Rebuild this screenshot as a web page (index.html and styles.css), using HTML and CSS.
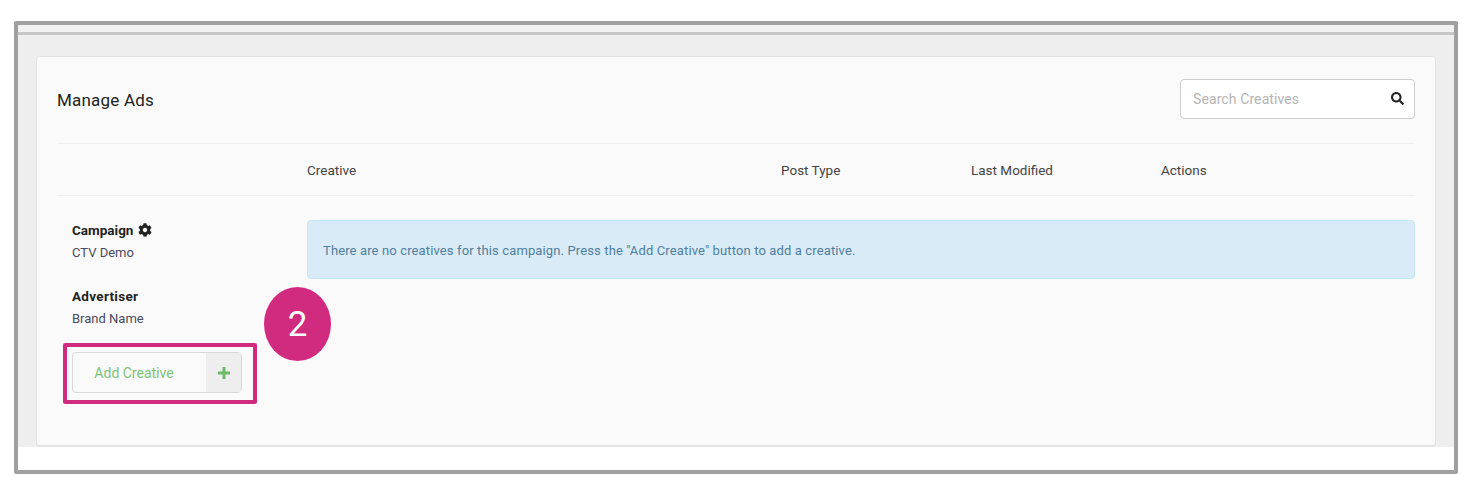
FILE: index.html
```html
<!DOCTYPE html>
<html lang="en">
<head>
    <meta charset="UTF-8">
    <title>Manage Ads</title>
    <link rel="stylesheet" href="styles.css">
</head>
<body>
    <div class="frame">
        <div class="top-strip"></div>
        <div class="page">
            <div class="panel">
                <div class="panel-head">
                    <h1>Manage Ads</h1>
                    <div class="search">
                        <span class="search-text">Search Creatives</span>
                        <svg class="search-icon" viewBox="0 0 512 512"><path d="M505 442.7L405.3 343c-4.5-4.5-10.6-7-17-7H372c27.6-35.3 44-79.7 44-128C416 93.1 322.9 0 208 0S0 93.1 0 208s93.1 208 208 208c48.3 0 92.7-16.4 128-44v16.3c0 6.4 2.5 12.5 7 17l99.7 99.7c9.4 9.4 24.6 9.4 33.9 0l28.3-28.3c9.4-9.4 9.4-24.6.1-34zM208 336c-70.7 0-128-57.2-128-128 0-70.7 57.2-128 128-128 70.7 0 128 57.2 128 128 0 70.7-57.2 128-128 128z"/></svg>
                    </div>
                </div>
                <div class="table-head">
                    <span></span>
                    <span>Creative</span>
                    <span>Post Type</span>
                    <span>Last Modified</span>
                    <span>Actions</span>
                </div>
                <div class="table-body">
                    <div class="side">
                        <div class="label">Campaign
                            <svg class="gear" viewBox="0 0 512 512"><path d="M487.4 315.7l-42.6-24.6c4.3-23.2 4.3-47 0-70.2l42.6-24.6c4.9-2.8 7.1-8.6 5.5-14-11.1-35.6-30-67.8-54.7-94.6-3.8-4.1-10-5.1-14.8-2.3L380.8 110c-17.9-15.4-38.5-27.3-60.8-35.1V25.8c0-5.6-3.9-10.5-9.4-11.7-36.7-8.2-74.3-7.8-109.2 0-5.5 1.2-9.4 6.1-9.4 11.7V75c-22.2 7.9-42.8 19.8-60.8 35.1L88.7 85.5c-4.9-2.8-11-1.9-14.8 2.3-24.7 26.7-43.6 58.9-54.7 94.6-1.7 5.4.6 11.2 5.5 14L67.3 221c-4.3 23.2-4.3 47 0 70.2l-42.6 24.6c-4.9 2.8-7.1 8.6-5.5 14 11.1 35.6 30 67.8 54.7 94.6 3.8 4.1 10 5.1 14.8 2.3l42.6-24.6c17.9 15.4 38.5 27.3 60.8 35.1v49.2c0 5.6 3.9 10.5 9.4 11.7 36.7 8.2 74.3 7.8 109.2 0 5.5-1.2 9.4-6.1 9.4-11.7v-49.2c22.2-7.9 42.8-19.8 60.8-35.1l42.6 24.6c4.9 2.8 11 1.9 14.8-2.3 24.7-26.7 43.6-58.9 54.7-94.6 1.5-5.5-.7-11.3-5.6-14.1zM256 336c-44.1 0-80-35.9-80-80s35.9-80 80-80 80 35.9 80 80-35.9 80-80 80z"/></svg>
                        </div>
                        <div class="value">CTV Demo</div>
                        <div class="label label-second">Advertiser</div>
                        <div class="value">Brand Name</div>
                        <div class="add-btn">
                            <span class="add-text">Add Creative</span>
                            <span class="add-icon">
                                <svg viewBox="0 0 12 12"><path d="M4.5 0h3v4.5H12v3H7.5V12h-3V7.5H0v-3h4.5z"/></svg>
                            </span>
                        </div>
                    </div>
                    <div class="notice">There are no creatives for this campaign. Press the "Add Creative" button to add a creative.</div>
                </div>
            </div>
        </div>

        <!-- Callout marks drawn over the page -->
        <div class="callout-box"></div>
        <div class="callout-num">2</div>
    </div>
</body>
</html>
```

FILE: styles.css
```css
body {
    margin: 0;
    background: #fff;
    font-family: Roboto, Arial, sans-serif;
    color: #333;
}
.frame {
    position: relative;
    box-sizing: border-box;
    width: 1444px;
    height: 453px;
    margin: 21px 0 0 14px;
    border: 4px solid #a0a0a0;
    border-radius: 2px;
    background: #fff;
}
.top-strip {
    height: 7px;
    background: #f1f1f1;
    border-bottom: 3px solid #c6c6c6;
}
.page {
    height: 412px;
    box-sizing: border-box;
    padding: 21px 18px 0 18px;
    background: #eeeeee;
}
.panel {
    box-sizing: border-box;
    height: 391px;
    padding: 0 20px 0 20px;
    background: #fafafa;
    border: 1px solid #e3e3e3;
    border-bottom-width: 2px;
    border-radius: 4px;
}
.panel-head {
    display: flex;
    align-items: center;
    justify-content: space-between;
    height: 87px;
    padding-bottom: 3px;
    box-sizing: border-box;
    border-bottom: 1px solid #eeeeee;
}
h1 {
    margin: 2px 0 0;
    font-size: 17px;
    font-weight: 400;
    letter-spacing: 0.2px;
    color: #222;
}
.search {
    display: flex;
    align-items: center;
    justify-content: space-between;
    box-sizing: border-box;
    width: 235px;
    height: 40px;
    padding: 0 10px 0 12px;
    background: #fff;
    border: 1px solid #ccc;
    border-radius: 4px;
}
.search-text {
    font-size: 14px;
    letter-spacing: 0.1px;
    color: #b4b4b4;
}
.search-icon {
    width: 13px;
    height: 13px;
    fill: #222;
}
.table-head {
    display: grid;
    grid-template-columns: 250px 474px 190px 190px 1fr;
    align-items: center;
    height: 52px;
    box-sizing: border-box;
    border-bottom: 1px solid #eeeeee;
    font-size: 13.5px;
    font-weight: 400;
    color: #444;
}
.table-body {
    display: flex;
    align-items: flex-start;
    padding-top: 24px;
}
.side {
    width: 250px;
    flex: none;
    padding: 0 0 0 15px;
    box-sizing: border-box;
}
.label {
    font-size: 13.5px;
    font-weight: 700;
    line-height: 20px;
    color: #222;
}
.label-second {
    margin-top: 23px;
    letter-spacing: 0.3px;
}
.gear {
    width: 14px;
    height: 14px;
    fill: #222;
    vertical-align: -2px;
    margin-left: 1px;
}
.value {
    margin-top: 3px;
    font-size: 13px;
    line-height: 20px;
    color: #4a4a5e;
}
.add-btn {
    display: flex;
    box-sizing: border-box;
    width: 170px;
    height: 41px;
    margin-top: 23px;
    background: #fafafa;
    border: 1px solid #d9d9d9;
    border-radius: 4px;
}
.add-text {
    flex: 1;
    padding-right: 11px;
    text-align: center;
    line-height: 41px;
    font-size: 14px;
    color: #7cc576;
}
.add-icon {
    display: flex;
    align-items: center;
    justify-content: center;
    width: 35px;
    background: #eeeeee;
}
.add-icon svg {
    width: 12px;
    height: 12px;
    fill: #6cb966;
}
.notice {
    flex: 1;
    box-sizing: border-box;
    height: 59px;
    padding: 0 15px;
    line-height: 59px;
    font-size: 13px;
    letter-spacing: 0.13px;
    color: #4f7f9e;
    background: #d9ebf6;
    border: 1px solid #c6e6f2;
    border-radius: 4px;
}
.callout-box {
    position: absolute;
    left: 45px;
    top: 318px;
    width: 194px;
    height: 61px;
    box-sizing: border-box;
    border: 4px solid #d12b7f;
    border-radius: 2px;
}
.callout-num {
    position: absolute;
    left: 246px;
    top: 262px;
    width: 67px;
    height: 74px;
    border-radius: 50%;
    background: #d12b7f;
    color: #fff;
    font-size: 35px;
    line-height: 76px;
    text-align: center;
}
```
